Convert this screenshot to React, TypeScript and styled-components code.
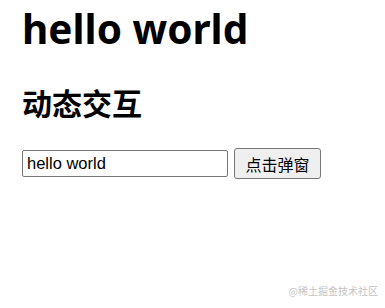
import { createGlobalStyle } from 'styled-components'
import styled from 'styled-components'
import { useState } from 'react'

const GlobalStyle = createGlobalStyle`
  html, body {
    margin: 0;
    padding: 0;
    background: #fff;
  }
  body {
    font-family: "Noto Sans", "Noto Sans CJK SC", sans-serif;
    color: #000;
  }
`

const Page = styled.div`
  position: relative;
  width: 385px;
  height: 308px;
  padding: 0 22px;
  box-sizing: border-box;
  overflow: hidden;
`

const Title = styled.h1`
  margin: 0;
  padding-top: 2px;
  font-size: 40.5px;
  line-height: 54px;
  font-weight: 700;
`

const SubTitle = styled.h2`
  margin: 26px 0 0;
  font-size: 30px;
  line-height: 40px;
  font-weight: 700;
  font-family: "Noto Sans CJK SC", sans-serif;
`

const Row = styled.div`
  display: flex;
  align-items: center;
  gap: 6px;
  margin-top: 26px;
`

const TextInput = styled.input`
  width: 206px;
  height: 27px;
  box-sizing: border-box;
  border: 1px solid #767676;
  border-radius: 2px;
  padding: 0 4px;
  font-family: "Liberation Sans", Arial, sans-serif;
  font-size: 16.5px;
  color: #000;
  outline: none;
`

const Button = styled.button`
  height: 31px;
  width: 87px;
  box-sizing: border-box;
  border: 1px solid #767676;
  border-radius: 3px;
  background: #efefef;
  font-family: "Noto Sans CJK SC", sans-serif;
  font-size: 16px;
  line-height: 28px;
  color: #000;
  padding: 0 6px;
`

const Watermark = styled.div`
  position: absolute;
  right: 7px;
  bottom: 10px;
  font-family: "Noto Sans CJK SC", sans-serif;
  font-size: 10px;
  color: #c4c4c4;
`

export default function App() {
  const [text, setText] = useState('hello world')
  return (
    <>
      <GlobalStyle />
      <Page>
        <Title>hello world</Title>
        <SubTitle>动态交互</SubTitle>
        <Row>
          <TextInput value={text} onChange={e => setText(e.target.value)} />
          <Button onClick={() => alert(text)}>点击弹窗</Button>
        </Row>
        <Watermark>@稀土掘金技术社区</Watermark>
      </Page>
    </>
  )
}
